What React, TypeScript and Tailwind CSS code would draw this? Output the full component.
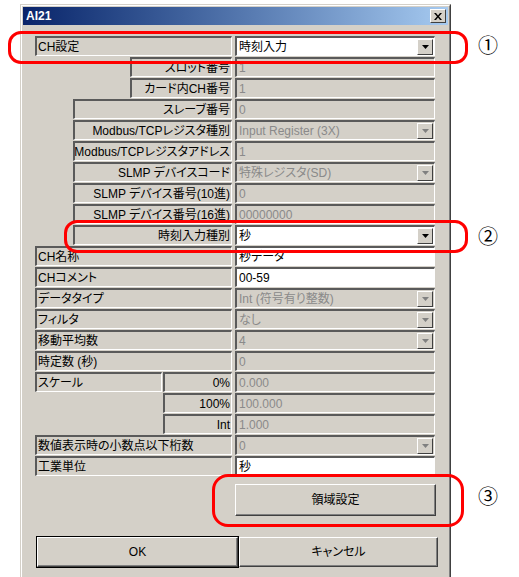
import React from "react";

type Row =
  | { kind: "field"; label: string; indent: number; align: "left" | "right"; value: string; enabled?: boolean; combo?: boolean }
  | { kind: "scale"; label?: string; sub: string; value: string };

const rows: Row[] = [
  { kind: "field", label: "CH設定", indent: 0, align: "left", value: "時刻入力", enabled: true, combo: true },
  { kind: "field", label: "スロット番号", indent: 95, align: "right", value: "1" },
  { kind: "field", label: "カード内CH番号", indent: 95, align: "right", value: "1" },
  { kind: "field", label: "スレーブ番号", indent: 38, align: "right", value: "0" },
  { kind: "field", label: "Modbus/TCPレジスタ種別", indent: 38, align: "right", value: "Input Register (3X)", combo: true },
  { kind: "field", label: "Modbus/TCPレジスタアドレス", indent: 38, align: "right", value: "1" },
  { kind: "field", label: "SLMP デバイスコード", indent: 38, align: "right", value: "特殊レジスタ(SD)", combo: true },
  { kind: "field", label: "SLMP デバイス番号(10進)", indent: 38, align: "right", value: "0" },
  { kind: "field", label: "SLMP デバイス番号(16進)", indent: 38, align: "right", value: "00000000" },
  { kind: "field", label: "時刻入力種別", indent: 38, align: "right", value: "秒", enabled: true, combo: true },
  { kind: "field", label: "CH名称", indent: 0, align: "left", value: "秒データ", enabled: true },
  { kind: "field", label: "CHコメント", indent: 0, align: "left", value: "00-59", enabled: true },
  { kind: "field", label: "データタイプ", indent: 0, align: "left", value: "Int (符号有り整数)", combo: true },
  { kind: "field", label: "フィルタ", indent: 0, align: "left", value: "なし", combo: true },
  { kind: "field", label: "移動平均数", indent: 0, align: "left", value: "4", combo: true },
  { kind: "field", label: "時定数 (秒)", indent: 0, align: "left", value: "0" },
  { kind: "scale", label: "スケール", sub: "0%", value: "0.000" },
  { kind: "scale", sub: "100%", value: "100.000" },
  { kind: "scale", sub: "Int", value: "1.000" },
  { kind: "field", label: "数値表示時の小数点以下桁数", indent: 0, align: "left", value: "0", combo: true },
  { kind: "field", label: "工業単位", indent: 0, align: "left", value: "秒", enabled: true },
];

const sunken = "border-t-2 border-l-2 border-b border-r border-t-[#5a5a5a] border-l-[#5a5a5a] border-b-white border-r-white";

function Label({ text, align }: { text: string; align: "left" | "right" }) {
  return (
    <div
      className={`${sunken} flex h-[20px] w-full items-center overflow-hidden whitespace-nowrap px-[1px] text-[12px] leading-none text-black ${
        align === "right" ? "justify-end" : "justify-start"
      }`}
    >
      {text}
    </div>
  );
}

function DropButton({ enabled }: { enabled?: boolean }) {
  return (
    <div className="mr-[1px] flex h-[16px] w-[16px] shrink-0 items-center justify-center border border-t-white border-l-white border-b-[#404040] border-r-[#404040] bg-[#d4d0c8]">
      <svg width="7" height="4" viewBox="0 0 7 4">
        <path d="M0 0h7L3.5 4z" fill={enabled ? "#000" : "#808080"} />
      </svg>
    </div>
  );
}

function Value({ value, enabled, combo }: { value: string; enabled?: boolean; combo?: boolean }) {
  return (
    <div
      className={`${sunken} flex h-[20px] w-[200px] shrink-0 items-center overflow-hidden whitespace-nowrap pl-[2px] text-[12px] leading-none ${
        enabled ? "bg-white text-black" : "bg-[#d4d0c8] text-[#8a8a8a]"
      }`}
    >
      <span className="flex-1">{value}</span>
      {combo && <DropButton enabled={enabled} />}
    </div>
  );
}

function Button({ text, className }: { text: string; className: string }) {
  return (
    <div
      className={`flex items-center justify-center border border-t-white border-l-white border-b-[#404040] border-r-[#404040] bg-[#d4d0c8] text-[12px] text-black shadow-[inset_-1px_-1px_0_#808080] ${className}`}
    >
      {text}
    </div>
  );
}

export default function App() {
  return (
    <div className="relative h-[577px] w-[519px] overflow-hidden bg-white font-['Liberation_Sans','Noto_Sans_CJK_JP',sans-serif] [font-feature-settings:'palt']">
      {/* dialog */}
      <div className="absolute left-[20px] top-[4px] h-[575px] w-[431px] border border-t-[#d4d0c8] border-l-[#d4d0c8] border-b-[#404040] border-r-[#404040] bg-[#d4d0c8]">
        <div className="flex h-full flex-col border border-t-white border-l-white border-b-[#808080] border-r-[#808080] p-[1px]">
          {/* title bar */}
          <div className="flex h-[18px] items-center justify-between bg-gradient-to-r from-[#0a246a] to-[#a6caf0] pl-[3px] pr-[2px]">
            <span className="text-[12px] font-bold text-white">AI21</span>
            <div className="flex h-[14px] w-[16px] items-center justify-center border border-t-white border-l-white border-b-[#404040] border-r-[#404040] bg-[#d4d0c8]">
              <svg width="8" height="7" viewBox="0 0 8 7">
                <path d="M0 0h2l2 2.5L6 0h2L5 3.5 8 7H6L4 4.5 2 7H0l3-3.5z" fill="#000" />
              </svg>
            </div>
          </div>

          {/* rows */}
          <div className="mt-[11px] flex flex-col pl-[12px]">
            {rows.map((r, i) => (
              <div key={i} className="flex h-[21px] items-start gap-[3px]">
                {r.kind === "field" ? (
                  <div className="flex w-[197px] shrink-0" style={{ paddingLeft: r.indent }}>
                    <Label text={r.label} align={r.align} />
                  </div>
                ) : (
                  <div className="flex w-[197px] shrink-0 gap-px">
                    <div className="w-[127px] shrink-0">{r.label && <Label text={r.label} align="left" />}</div>
                    <div className="flex-1">
                      <Label text={r.sub} align="right" />
                    </div>
                  </div>
                )}
                <Value value={r.value} enabled={r.kind === "field" ? r.enabled : false} combo={r.kind === "field" ? r.combo : false} />
              </div>
            ))}
          </div>

          <div className="mt-[7px] flex pl-[212px]">
            <Button text="領域設定" className="h-[32px] w-[201px]" />
          </div>

          <div className="mt-[21px] flex pl-[14px]">
            <Button text="OK" className="h-[30px] w-[201px] outline outline-1 outline-black" />
            <Button text="キャンセル" className="ml-[1px] h-[30px] w-[199px]" />
          </div>
        </div>
      </div>

      {/* annotations */}
      <div className="absolute left-[8px] top-[31px] h-[33px] w-[460px] rounded-[13px] border-[3px] border-[#ff0000]" />
      <div className="absolute left-[64px] top-[220px] h-[33px] w-[404px] rounded-[13px] border-[3px] border-[#ff0000]" />
      <div className="absolute left-[212px] top-[474px] h-[53px] w-[252px] rounded-[16px] border-[3px] border-[#ff0000]" />

      <div className="absolute left-[478px] top-[35px] font-['Noto_Sans_CJK_JP',sans-serif] text-[20px] leading-none text-black">①</div>
      <div className="absolute left-[478px] top-[226px] font-['Noto_Sans_CJK_JP',sans-serif] text-[20px] leading-none text-black">②</div>
      <div className="absolute left-[478px] top-[486px] font-['Noto_Sans_CJK_JP',sans-serif] text-[20px] leading-none text-black">③</div>
    </div>
  );
}
